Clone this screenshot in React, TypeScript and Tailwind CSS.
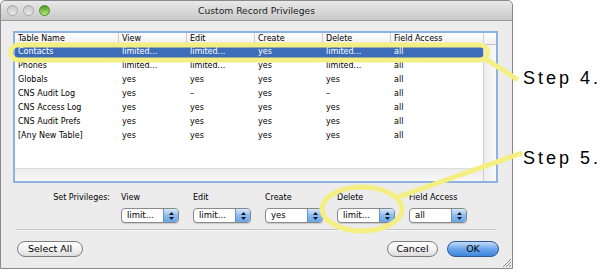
import type { FC } from "react";

const rows: string[][] = [
  ["Contacts", "limited...", "limited...", "yes", "limited...", "all"],
  ["Phones", "limited...", "limited...", "yes", "limited...", "all"],
  ["Globals", "yes", "yes", "yes", "yes", "all"],
  ["CNS Audit Log", "yes", "–", "yes", "–", "all"],
  ["CNS Access Log", "yes", "yes", "yes", "yes", "all"],
  ["CNS Audit Prefs", "yes", "yes", "yes", "yes", "all"],
  ["[Any New Table]", "yes", "yes", "yes", "yes", "all"],
];

const headers = ["Table Name", "View", "Edit", "Create", "Delete", "Field Access"];
const colW = ["w-[103px]", "w-[68px]", "w-[68px]", "w-[68px]", "w-[68px]", "w-[93px]"];

const Popup: FC<{ value: string }> = ({ value }) => (
  <div className="flex h-[15px] w-[58px] overflow-hidden rounded-[4px] border border-[#8a8a8a] bg-white shadow-[0_1px_1px_rgba(0,0,0,0.15)]">
    <div className="flex-1 pl-[5px] text-[8.5px] leading-[13px] text-black">{value}</div>
    <div className="flex w-[15px] flex-col items-center justify-center gap-[2px] border-l border-[#6b8fc0] bg-gradient-to-b from-[#d6e8fb] via-[#8dbcf0] to-[#6aa6ea]">
      <svg width="5" height="3" viewBox="0 0 5 3">
        <path d="M0 3 L2.5 0 L5 3 Z" fill="#1a1a1a" />
      </svg>
      <svg width="5" height="3" viewBox="0 0 5 3">
        <path d="M0 0 L2.5 3 L5 0 Z" fill="#1a1a1a" />
      </svg>
    </div>
  </div>
);

const Button: FC<{ label: string; w: string; primary?: boolean }> = ({ label, w, primary }) => (
  <div
    className={`flex h-[16px] ${w} items-center justify-center rounded-full border text-[9.5px] ${
      primary
        ? "border-[#2f5a96] bg-gradient-to-b from-[#c4dcf7] via-[#6aa5ea] to-[#3f86de] text-black"
        : "border-[#7d7d7d] bg-gradient-to-b from-white via-[#f2f2f2] to-[#dcdcdc] text-black"
    }`}
  >
    {label}
  </div>
);

export default function App() {
  return (
    <div className="relative h-[270px] w-[604px] overflow-hidden bg-white font-['DejaVu_Sans',sans-serif]">
      <div className="flex h-[269px] w-[513px] flex-col rounded-t-[5px] border border-[#8a8a8a] bg-[#ececec]">
        {/* title bar */}
        <div className="relative flex h-[20px] items-center rounded-t-[5px] border-b border-[#9a9a9a] bg-gradient-to-b from-[#e9e9e9] to-[#c9c9c9]">
          <div className="flex gap-[5px] pl-[6px]">
            <div className="h-[11px] w-[11px] rounded-full border border-[#a5a5a5] bg-gradient-to-b from-[#c8c8c8] to-[#ececec]" />
            <div className="h-[11px] w-[11px] rounded-full border border-[#a5a5a5] bg-gradient-to-b from-[#c8c8c8] to-[#ececec]" />
            <div className="h-[11px] w-[11px] rounded-full border border-[#4f8a2e] bg-gradient-to-b from-[#4e9a22] to-[#b6ea7c]" />
          </div>
          <div className="absolute inset-x-0 text-center text-[9.2px] text-[#222]">Custom Record Privileges</div>
        </div>

        {/* table */}
        <div className="ml-[12px] mt-[10px] flex h-[152px] w-[485px] border-2 border-[#8eb2e0] bg-white">
          <div className="flex w-[468px] flex-col">
            <div className="flex h-[12px] border-b border-[#c4c4c4] bg-gradient-to-b from-white to-[#efefef]">
              {headers.map((h, i) => (
                <div
                  key={h}
                  className={`${colW[i]} ${i > 0 ? "border-l border-[#cdcdcd]" : ""} pl-[3px] text-[8px] leading-[11px] text-black`}
                >
                  {h}
                </div>
              ))}
            </div>
            {rows.map((r, ri) => (
              <div
                key={r[0]}
                className={`flex h-[14px] ${ri === 0 ? "bg-[#3d6cb8] text-white" : "text-black"}`}
              >
                {r.map((c, ci) => (
                  <div key={ci} className={`${colW[ci]} ${ci > 0 ? "pl-[4px]" : "pl-[3px]"} text-[8px] leading-[14px]`}>
                    {c}
                  </div>
                ))}
              </div>
            ))}
            <div className="flex-1" />
            <div className="h-[13px] border-t border-[#dcdcdc] bg-gradient-to-b from-[#ececec] to-[#f7f7f7]" />
          </div>
          <div className="flex flex-1 flex-col border-l border-[#cdcdcd]">
            <div className="h-[12px] border-b border-[#c4c4c4] bg-gradient-to-b from-white to-[#efefef]" />
            <div className="flex-1 bg-gradient-to-r from-[#ededed] to-[#f8f8f8]" />
          </div>
        </div>

        {/* set privileges */}
        <div className="ml-[13px] mt-[10px] flex">
          <div className="w-[96px] text-right text-[8px] leading-[10px] text-black">Set Privileges:</div>
          <div className="ml-[11px] flex">
            {[
              ["View", "limit..."],
              ["Edit", "limit..."],
              ["Create", "yes"],
              ["Delete", "limit..."],
              ["Field Access", "all"],
            ].map(([l, v]) => (
              <div key={l} className="flex w-[72px] flex-col gap-[5px]">
                <div className="text-[8px] leading-[10px] text-black">{l}</div>
                <Popup value={v} />
              </div>
            ))}
          </div>
        </div>

        <div className="ml-[14px] mt-[6px] h-[2px] w-[482px] border-t border-[#c6c6c6] bg-[#f7f7f7]" />

        {/* buttons */}
        <div className="mt-[10px] flex items-center pl-[16px] pr-[13px]">
          <Button label="Select All" w="w-[66px]" />
          <div className="flex-1" />
          <Button label="Cancel" w="w-[51px]" />
          <div className="w-[9px]" />
          <Button label="OK" w="w-[52px]" primary />
        </div>

        <div className="flex flex-1 items-end justify-end pb-[1px] pr-[1px]">
          <svg width="9" height="9" viewBox="0 0 9 9">
            <path d="M9 1 L1 9 M9 4 L4 9 M9 7 L7 9" stroke="#8a8a8a" strokeWidth="1" />
          </svg>
        </div>
      </div>

      {/* annotations */}
      <svg className="pointer-events-none absolute left-0 top-0" width="604" height="270" viewBox="0 0 604 270">
        <rect x="10.5" y="45" width="477" height="15" rx="7.5" fill="none" stroke="#f4ef82" strokeWidth="5" />
        <line x1="484" y1="58" x2="518" y2="80" stroke="#f4ef82" strokeWidth="5" />
        <ellipse cx="362" cy="209" rx="40" ry="22" fill="none" stroke="#f4ef82" strokeWidth="5" />
        <line x1="398" y1="197" x2="522" y2="153" stroke="#f4ef82" strokeWidth="5" />
      </svg>
      <div className="absolute left-[523px] top-[68px] font-['Liberation_Sans',sans-serif] text-[18px] leading-[20px] tracking-[3px] text-black">
        Step 4.
      </div>
      <div className="absolute left-[523px] top-[148px] font-['Liberation_Sans',sans-serif] text-[18px] leading-[20px] tracking-[3px] text-black">
        Step 5.
      </div>
    </div>
  );
}
